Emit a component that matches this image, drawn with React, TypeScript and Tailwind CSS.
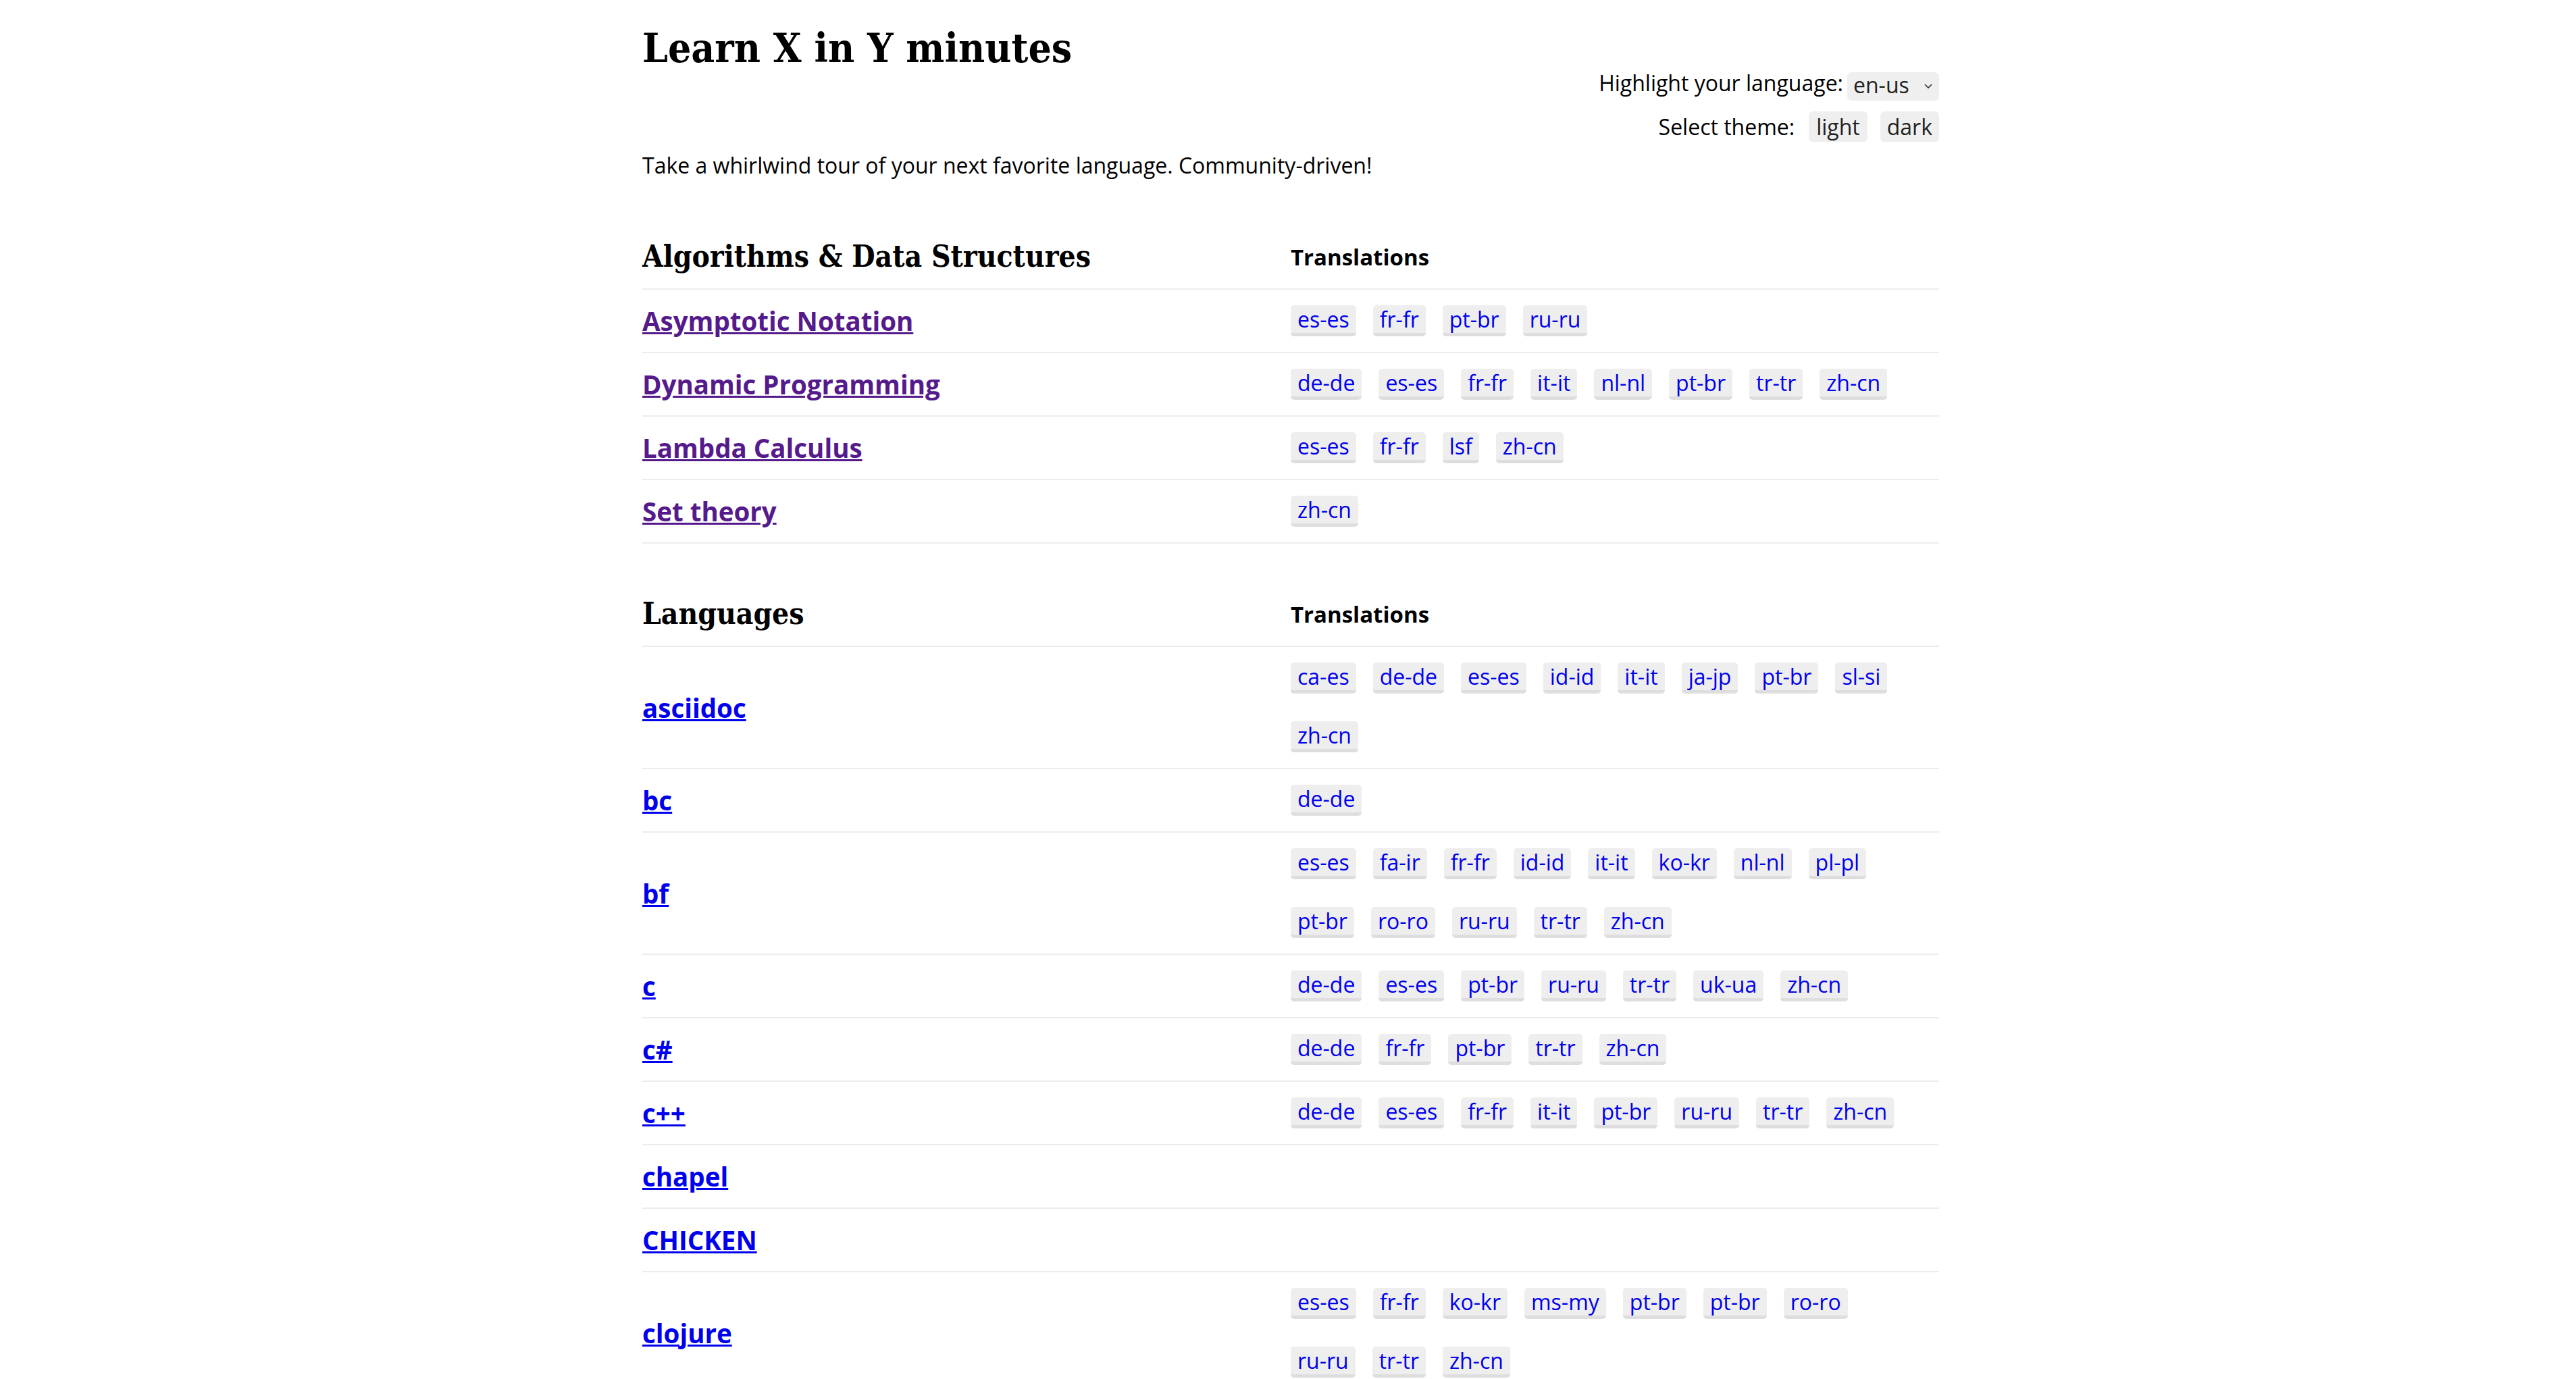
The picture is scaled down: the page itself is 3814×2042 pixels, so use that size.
import React from 'react';

type Topic = { name: string; langs: string[] };

const algorithms: Topic[] = [
  { name: 'Asymptotic Notation', langs: ['es-es', 'fr-fr', 'pt-br', 'ru-ru'] },
  { name: 'Dynamic Programming', langs: ['de-de', 'es-es', 'fr-fr', 'it-it', 'nl-nl', 'pt-br', 'tr-tr', 'zh-cn'] },
  { name: 'Lambda Calculus', langs: ['es-es', 'fr-fr', 'lsf', 'zh-cn'] },
  { name: 'Set theory', langs: ['zh-cn'] },
];

const languages: Topic[] = [
  { name: 'asciidoc', langs: ['ca-es', 'de-de', 'es-es', 'id-id', 'it-it', 'ja-jp', 'pt-br', 'sl-si', 'zh-cn'] },
  { name: 'bc', langs: ['de-de'] },
  {
    name: 'bf',
    langs: ['es-es', 'fa-ir', 'fr-fr', 'id-id', 'it-it', 'ko-kr', 'nl-nl', 'pl-pl', 'pt-br', 'ro-ro', 'ru-ru', 'tr-tr', 'zh-cn'],
  },
  { name: 'c', langs: ['de-de', 'es-es', 'pt-br', 'ru-ru', 'tr-tr', 'uk-ua', 'zh-cn'] },
  { name: 'c#', langs: ['de-de', 'fr-fr', 'pt-br', 'tr-tr', 'zh-cn'] },
  { name: 'c++', langs: ['de-de', 'es-es', 'fr-fr', 'it-it', 'pt-br', 'ru-ru', 'tr-tr', 'zh-cn'] },
  { name: 'chapel', langs: [] },
  { name: 'CHICKEN', langs: [] },
  {
    name: 'clojure',
    langs: ['es-es', 'fr-fr', 'ko-kr', 'ms-my', 'pt-br', 'pt-br', 'ro-ro', 'ru-ru', 'tr-tr', 'zh-cn'],
  },
  { name: 'clojure macros', langs: ['zh-cn'] },
  { name: 'cmake', langs: ['zh-cn'] },
];

const Chip = ({ label }: { label: string }) => (
  <a
    href="#"
    className="mr-[25px] h-[46px] rounded-[5px] border-b-[5px] border-[#dedede] bg-[#eeeeee] px-[10px] text-[32px] leading-[41px] text-[#0000ee]"
  >
    {label}
  </a>
);

const Section = ({ title, topics, visited }: { title: string; topics: Topic[]; visited?: boolean }) => (
  <section>
    <div className="grid h-[94px] grid-cols-2 items-center">
      <h2 className="font-['DejaVu_Serif_Condensed','DejaVu_Serif',serif] text-[44px] font-bold leading-none text-black [font-stretch:condensed]">
        {title}
      </h2>
      <div className="text-[33px] font-bold leading-none text-black">Translations</div>
    </div>
    <div className="border-b-2 border-[#ececec]">
      {topics.map((t) => (
        <div key={t.name} className="grid min-h-[94px] grid-cols-2 border-t-2 border-[#ececec]">
          <div className="flex items-center">
            <a
              href="#"
              className={
                'text-[38.5px] font-bold leading-[56px] underline decoration-[3px] underline-offset-[2px] ' +
                (visited ? 'text-[#551a8b]' : 'text-[#0000ee]')
              }
            >
              {t.name}
            </a>
          </div>
          <div className="flex flex-wrap content-start gap-y-[41px] py-[23px]">
            {t.langs.map((l, i) => (
              <Chip key={l + i} label={l} />
            ))}
          </div>
        </div>
      ))}
    </div>
  </section>
);

export default function App() {
  return (
    <div className="min-h-screen bg-white font-['Open_Sans','Noto_Sans',sans-serif] text-black">
      <div className="mx-auto w-[1928px] pl-[8px]">
        <header className="flex items-start justify-between">
          <h1 className="mt-[41px] font-['DejaVu_Serif_Condensed','DejaVu_Serif',serif] text-[60px] font-bold leading-[60px] [font-stretch:condensed]">
            Learn X in Y minutes
          </h1>
          <div className="flex flex-col items-end pt-[107px] text-[32px]">
            <div className="flex items-start">
              <span className="leading-[32px]">Highlight your language:</span>
              <div className="ml-[6px] flex h-[42px] w-[136px] items-start justify-between rounded-[6px] bg-[#efefef] pl-[9px] pr-[10px] text-[#222]">
                <span className="leading-[38px]">en-us</span>
                <svg width="12" height="8" viewBox="0 0 12 8" className="mt-[17px]">
                  <polyline points="1,1 6,6 11,1" fill="none" stroke="#333" strokeWidth="1.6" />
                </svg>
              </div>
            </div>
            <div className="mt-[16px] flex items-start">
              <span className="leading-[45px]">Select theme:</span>
              <button className="ml-[21px] h-[45px] rounded-[6px] bg-[#efefef] px-[11px] leading-[45px] text-[#222]">
                light
              </button>
              <button className="ml-[19px] h-[45px] rounded-[6px] bg-[#efefef] px-[10px] leading-[45px] text-[#222]">
                dark
              </button>
            </div>
          </div>
        </header>
        <p className="mt-[11px] text-[32px] leading-[48px]">
          Take a whirlwind tour of your next favorite language. Community-driven!
        </p>
        <div className="mt-[64px]">
          <Section title="Algorithms & Data Structures" topics={algorithms} visited />
        </div>
        <div className="mt-[57px]">
          <Section title="Languages" topics={languages} />
        </div>
      </div>
    </div>
  );
}
